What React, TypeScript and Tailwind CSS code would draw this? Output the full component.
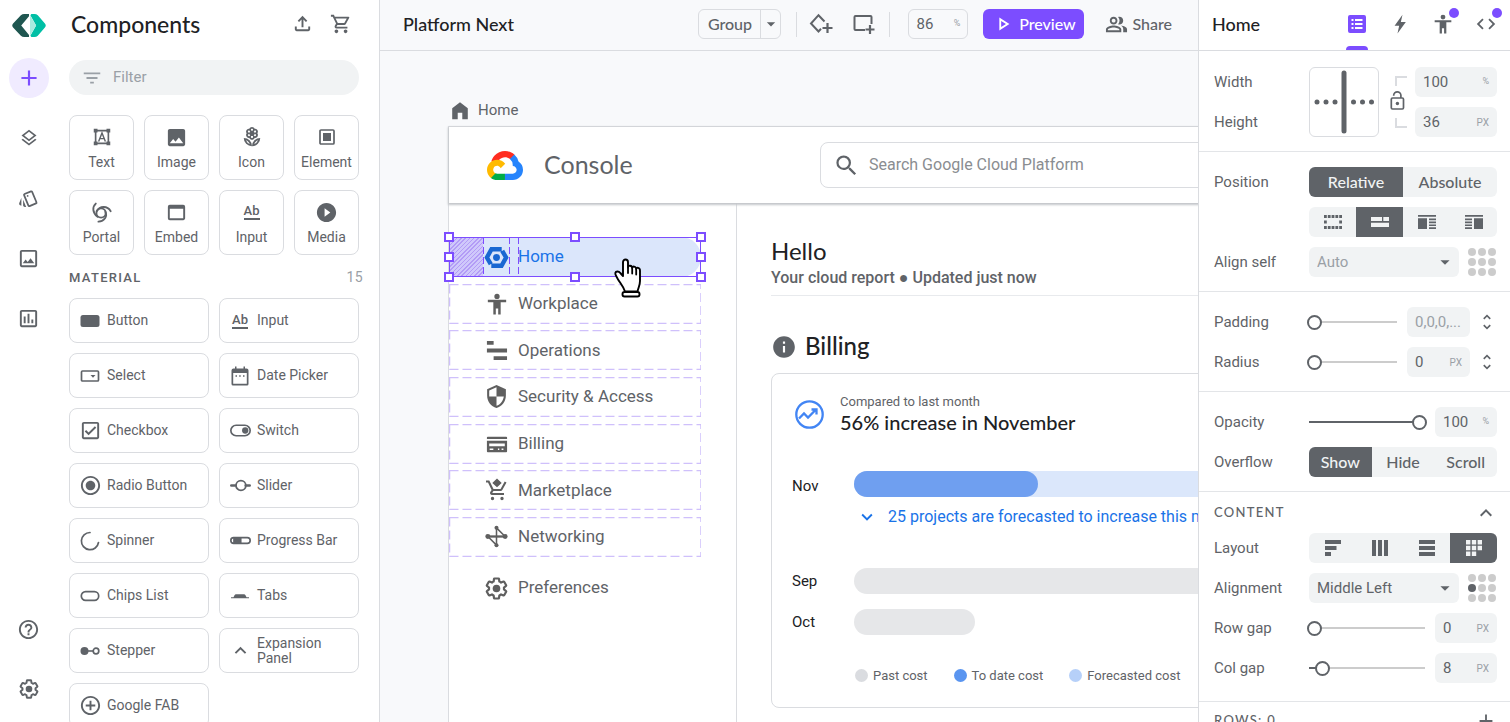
import type { ReactNode } from 'react';
import {
  MdAdd, MdArrowDropDown, MdCode, MdExpandLess, MdExpandMore, MdFilterList, MdImage, MdInfo,
  MdOutlineAddCircleOutline, MdOutlineAssessment, MdOutlineCheckBox, MdOutlineFileUpload, MdOutlineHelpOutline,
  MdOutlineImage, MdOutlineLayers, MdOutlineLocalFlorist, MdOutlinePeopleAlt, MdOutlinePlayArrow,
  MdOutlineShoppingCart, MdOutlineStyle, MdPlayCircleFilled, MdRadioButtonChecked, MdSearch, MdSecurity,
  MdUnfoldMore, MdWebAsset,
} from 'react-icons/md';

type SvgProps = { size?: number; box?: string; className?: string; children: ReactNode };

function Svg({ size = 24, box = '0 0 24 24', className, children }: SvgProps) {
  return (
    <svg width={size} height={size} viewBox={box} fill="currentColor" className={className} aria-hidden="true">
      {children}
    </svg>
  );
}

function Gear({ size }: { size: number }) {
  return (
    <Svg size={size} box="0.500 0.500 23 23">
      <path
        fill="none"
        stroke="currentColor"
        strokeWidth="2.200"
        strokeLinejoin="round"
        d="M19.43 12.98c.04-.32.07-.64.07-.98 0-.34-.03-.66-.07-.98l2.11-1.65c.19-.15.24-.42.12-.64l-2-3.46c-.09-.16-.26-.25-.44-.25-.06 0-.12.01-.17.03l-2.49 1c-.52-.4-1.08-.73-1.69-.98l-.38-2.65C14.46 2.18 14.25 2 14 2h-4c-.25 0-.46.18-.49.42l-.38 2.65c-.61.25-1.17.59-1.69.98l-2.49-1c-.06-.02-.12-.03-.18-.03-.17 0-.34.09-.43.25l-2 3.46c-.13.22-.07.49.12.64l2.11 1.65c-.04.32-.07.65-.07.98 0 .33.03.66.07.98l-2.11 1.65c-.19.15-.24.42-.12.64l2 3.46c.09.16.26.25.44.25.06 0 .12-.01.17-.03l2.49-1c.52.4 1.08.73 1.69.98l.38 2.65c.03.24.24.42.49.42h4c.25 0 .46-.18.49-.42l.38-2.65c.61-.25 1.17-.59 1.69-.98l2.49 1c.06.02.12.03.18.03.17 0 .34-.09.43-.25l2-3.46c.12-.22.07-.49-.12-.64l-2.11-1.65z"
      />
      <circle cx="12" cy="12" r="3.800" />
    </Svg>
  );
}

function Person({ size }: { size: number }) {
  return (
    <Svg size={size}>
      <path d="M12 .8a2.900 2.900 0 1 1 0 5.800 2.900 2.900 0 0 1 0-5.800zM22 10h-6v13.500h-2.700V17h-2.600v6.500H8V10H2V7.400h20z" />
    </Svg>
  );
}

function Brand() {
  return (
    <svg width="34" height="23" viewBox="0 0 100 68" aria-hidden="true">
      <path fill="#1f5650" d="M50 0H36q-6 0-10 4L3 28q-5 6 0 12l23 24q4 4 10 4h14V62L27 34 50 7z" />
      <path fill="#00bfa5" d="M57 0h9q6 0 10 4l21 24q5 6 0 12L76 64q-4 4-10 4h-9l-3-4 17-30L54 4z" />
      <path fill="#a9ebdf" d="M53 4v60l18-30z" />
    </svg>
  );
}

function Cloud() {
  return (
    <svg width="36" height="29" viewBox="0 0 256 206" aria-hidden="true">
      <path fill="#ff2d20" d="M170.252 56.819l22.253-22.253 1.483-9.37C153.437-11.677 88.976-7.496 52.42 33.920 42.267 45.423 34.734 59.764 30.717 74.573l7.970-1.123 44.505-7.340 3.436-3.513c19.797-21.742 53.270-24.667 76.128-6.168l7.496.39z" />
      <path fill="#2684fc" d="M224.205 73.918a100.249 100.249 0 0 0-30.217-48.722l-31.232 31.232a55.515 55.515 0 0 1 20.379 44.037v5.544c15.350 0 27.797 12.445 27.797 27.796 0 15.352-12.446 27.485-27.797 27.485h-55.671l-5.466 5.934v33.340l5.466 5.231h55.670c39.930.311 72.553-31.494 72.864-71.424a72.303 72.303 0 0 0-31.793-60.453" />
      <path fill="#00ac47" d="M71.870 205.796h55.593V161.290H71.870a27.275 27.275 0 0 1-11.477-2.498l-7.887 2.420-22.409 22.253-1.952 7.574c12.567 9.489 26.998 14.813 43.725 14.757" />
      <path fill="#ffba00" d="M71.870 61.425C31.940 61.664-.237 94.228.001 134.158a72.301 72.301 0 0 0 28.222 56.880l32.248-32.246c-13.990-6.322-20.208-22.786-13.887-36.776 6.320-13.990 22.786-20.208 36.775-13.888a27.796 27.796 0 0 1 13.887 13.888l32.248-32.248A72.224 72.224 0 0 0 71.870 61.425" />
    </svg>
  );
}

function AbIcon() {
  return (
    <span className="flex w-4 flex-col items-center border-b-2 border-current font-[Roboto] text-[13px] leading-[14px] font-medium" aria-hidden="true">
      Ab
    </span>
  );
}

const railItems = [
  { label: 'Layers', icon: <MdOutlineLayers size={20} /> },
  { label: 'Styles', icon: <MdOutlineStyle size={21} /> },
  { label: 'Assets', icon: <MdOutlineImage size={23} /> },
  { label: 'Data', icon: <MdOutlineAssessment size={23} /> },
];

const tiles = [
  {
    label: 'Text',
    icon: (
      <Svg size={18}>
        <path fill="none" stroke="currentColor" strokeWidth="2.200" d="M3.500 3.500h17v17h-17z" />
        <path d="M1 1h5v5H1zM18 1h5v5h-5zM1 18h5v5H1zM18 18h5v5h-5z" />
        <path fill="none" stroke="currentColor" strokeWidth="1.900" d="M7.500 18L12 6.500 16.500 18M9 14.200h6" />
      </Svg>
    ),
  },
  { label: 'Image', icon: <MdImage size={23} /> },
  { label: 'Icon', icon: <MdOutlineLocalFlorist size={22} /> },
  {
    label: 'Element',
    icon: (
      <Svg size={16} box="0 0 16 16">
        <rect x="1" y="1" width="14" height="14" rx="1" fill="none" stroke="currentColor" strokeWidth="1.700" />
        <path d="M4 4h8v8H4z" />
      </Svg>
    ),
  },
  {
    label: 'Portal',
    icon: (
      <Svg size={21}>
        <g fill="none" stroke="currentColor" strokeWidth="2.100" strokeLinecap="round">
          <circle cx="11.500" cy="12.500" r="5.300" />
          <path d="M7.500 17C1.500 12.500 1.300 5.500 5.500 1.800M6.500 10.500C10 4.500 18.500 3.800 22.500 10.500M16.500 11c2.500 5.500-1 11-8 11.500" />
        </g>
      </Svg>
    ),
  },
  { label: 'Embed', icon: <MdWebAsset size={23} /> },
  { label: 'Input', icon: <AbIcon /> },
  { label: 'Media', icon: <MdPlayCircleFilled size={23} /> },
];

const materials: { label: string; icon: ReactNode }[] = [
  { label: 'Button', icon: <Svg size={20} box="0 0 20 20"><rect x=".5" y="4" width="19" height="12" rx="2.500" /></Svg> },
  { label: 'Input', icon: <AbIcon /> },
  {
    label: 'Select',
    icon: (
      <Svg size={20} box="0 0 20 20">
        <rect x="1.500" y="5" width="17" height="10" rx="1" fill="none" stroke="currentColor" strokeWidth="1.700" />
        <path d="M10.500 9h5L13 11.700z" />
      </Svg>
    ),
  },
  {
    label: 'Date Picker',
    icon: (
      <Svg size={20} box="0 0 20 20">
        <path fillRule="evenodd" d="M5 .5h1.500v2h7v-2H15v2h1.500a2 2 0 0 1 2 2V18a1.500 1.500 0 0 1-1.500 1.500H3A1.500 1.500 0 0 1 1.500 18V4.500a2 2 0 0 1 2-2H5zM3.200 7v10.800h13.600V7z" />
        <path d="M5.500 9.200H7v1.500H5.500zM9.200 9.200h1.500v1.500H9.200zM13 9.200h1.500v1.500H13z" />
      </Svg>
    ),
  },
  { label: 'Checkbox', icon: <MdOutlineCheckBox size={23} /> },
  {
    label: 'Switch',
    icon: (
      <Svg size={21} box="0 0 20 20">
        <rect x=".8" y="5" width="18.400" height="10" rx="5" fill="none" stroke="currentColor" strokeWidth="1.600" />
        <circle cx="14.500" cy="10" r="3" />
      </Svg>
    ),
  },
  { label: 'Radio Button', icon: <MdRadioButtonChecked size={23} /> },
  {
    label: 'Slider',
    icon: (
      <Svg size={21} box="0 0 20 20">
        <path stroke="currentColor" strokeWidth="2.600" strokeLinecap="round" d="M1.300 10H5M15 10h3.700" />
        <circle cx="10.400" cy="10" r="4.700" fill="none" stroke="currentColor" strokeWidth="1.700" />
      </Svg>
    ),
  },
  {
    label: 'Spinner',
    icon: (
      <Svg size={20} box="0 0 20 20">
        <path fill="none" stroke="currentColor" strokeWidth="1.700" strokeLinecap="round" d="M10 1.500A8.600 8.600 0 1 0 18.500 11.500" />
      </Svg>
    ),
  },
  {
    label: 'Progress Bar',
    icon: (
      <Svg size={21} box="0 0 20 20">
        <rect x=".8" y="7.300" width="18.400" height="5.400" rx="2.700" fill="none" stroke="currentColor" strokeWidth="1.600" />
        <path d="M3 7h8v6H3z" />
      </Svg>
    ),
  },
  {
    label: 'Chips List',
    icon: (
      <Svg size={20} box="0 0 20 20">
        <rect x="1.300" y="5.700" width="17.400" height="8.600" rx="4.300" fill="none" stroke="currentColor" strokeWidth="1.700" />
      </Svg>
    ),
  },
  { label: 'Tabs', icon: <Svg size={20} box="0 0 20 20"><path d="M1 11.300h2.500l1-2q.5-1 1.500-1h8q1 0 1.500 1l1 2H19v1H1z" /></Svg> },
  {
    label: 'Stepper',
    icon: (
      <Svg size={20} box="0 0 20 20">
        <circle cx="4.500" cy="10" r="4" />
        <path d="M8 9.200h6v1.600H8z" />
        <circle cx="16" cy="10" r="2.800" fill="none" stroke="currentColor" strokeWidth="1.700" />
      </Svg>
    ),
  },
  { label: 'Expansion Panel', icon: <MdExpandLess size={23} /> },
  { label: 'Google FAB', icon: <MdOutlineAddCircleOutline size={23} /> },
];

function LeftSide() {
  return (
    <aside className="flex w-[380px] shrink-0 border-r border-[#dadce0] bg-white text-[#5f6368]">
      <nav className="flex w-[57px] flex-col items-center pb-[13px]" aria-label="Tools">
        <a href="#home" aria-label="Start page" className="flex h-[50px] items-center">
          <Brand />
        </a>
        <div className="mt-2 flex flex-col gap-5">
          <button aria-label="Add" className="flex size-10 items-center justify-center rounded-full bg-[#f0ebff] text-[#7c4dff]">
            <MdAdd size={26} />
          </button>
          {railItems.map((item) => (
            <button key={item.label} aria-label={item.label} className="flex size-10 items-center justify-center">
              {item.icon}
            </button>
          ))}
        </div>
        <div className="mt-auto flex flex-col gap-5">
          <button aria-label="Help" className="flex size-10 items-center justify-center"><MdOutlineHelpOutline size={23} /></button>
          <button aria-label="Settings" className="flex size-10 items-center justify-center"><Gear size={20} /></button>
        </div>
      </nav>
      <div className="flex min-w-0 flex-1 flex-col overflow-hidden pr-5 pl-3">
        <div className="flex h-[50px] shrink-0 items-center pr-[7px] pb-[3px] pl-[2px]">
          <h1 className="flex-1 font-[Lato] text-[23px] leading-7 font-medium text-[#202124]">Components</h1>
          <button aria-label="Upload"><MdOutlineFileUpload size={23} /></button>
          <button aria-label="Shop" className="ml-4"><MdOutlineShoppingCart size={22} /></button>
        </div>
        <label className="mt-[10px] flex h-[35px] shrink-0 items-center gap-[10px] rounded-full bg-[#f1f3f4] pr-4 pl-3 text-[#9aa0a6]">
          <MdFilterList size={22} className="shrink-0" />
          <input type="text" aria-label="Filter components" placeholder="Filter" className="w-full min-w-0 bg-transparent text-[15px] outline-none placeholder:text-[#9aa0a6]" />
        </label>
        <div className="mt-5 grid shrink-0 grid-cols-4 gap-[10px]">
          {tiles.map((tile) => (
            <button key={tile.label} className="flex h-[65px] flex-col items-center rounded-lg border border-[#dadce0] pt-2 text-[14px] leading-5">
              <span className="flex h-[26px] items-center justify-center">{tile.icon}</span>
              <span className="mt-[2px]">{tile.label}</span>
            </button>
          ))}
        </div>
        <div className="flex h-[43px] shrink-0 items-center justify-between pt-[2px]">
          <h2 className="text-[13px] font-medium tracking-widest">MATERIAL</h2>
          <span className="-mr-[4px] text-[14px] tracking-wide text-[#9aa0a6]">15</span>
        </div>
        <div className="grid shrink-0 grid-cols-2 gap-[10px]">
          {materials.map((item) => (
            <button key={item.label} className="flex h-[45px] items-center gap-[7px] rounded-lg border border-[#dadce0] pr-4 pl-[10px] text-left text-[14px] leading-[15px]">
              <span className="flex w-5 shrink-0 items-center justify-center [&>svg]:shrink-0">{item.icon}</span>
              {item.label}
            </button>
          ))}
        </div>
      </div>
    </aside>
  );
}

function TopBar() {
  return (
    <header className="flex h-[51px] shrink-0 items-center border-b border-[#dadce0] pr-[26px] pb-[2px] pl-[23px] font-[Lato] font-medium text-[#5f6368]">
      <h2 className="flex-1 text-[18px] leading-6 text-[#202124]">Platform Next</h2>
      <div className="flex h-[30px] w-[83px] rounded-md border border-[#dadce0]">
        <button className="flex-1 pb-px text-[16px]">Group</button>
        <button aria-label="More grouping" className="flex w-[20px] items-center justify-center border-l border-[#dadce0]"><MdArrowDropDown size={20} className="shrink-0" /></button>
      </div>
      <span className="mr-3 ml-[15px] h-[25px] w-px bg-[#dadce0]" />
      <button aria-label="Add symbol">
        <Svg size={24}>
          <g fill="none" stroke="currentColor" strokeWidth="2">
            <path d="M15.500 9.500L9.500 3.200 2 11.500l7.500 8 2.500-2.700" />
            <path strokeWidth="2.200" d="M18.500 11v10M13.500 16h10" />
          </g>
        </Svg>
      </button>
      <button aria-label="Add board" className="ml-[18px]">
        <Svg size={24}>
          <g fill="none" stroke="currentColor" strokeWidth="2">
            <path d="M20.500 12V5a1 1 0 0 0-1-1h-15a1 1 0 0 0-1 1v12a1 1 0 0 0 1 1H14" />
            <path strokeWidth="2.200" d="M19 13v9M14.500 17.500h9" />
          </g>
        </Svg>
      </button>
      <span className="mr-[18px] ml-[14px] h-[25px] w-px bg-[#dadce0]" />
      <label className="flex h-[30px] w-[60px] items-center rounded-md border border-[#dadce0] px-[7px] font-[Roboto] font-normal">
        <input type="text" aria-label="Zoom" defaultValue="86" className="w-full min-w-0 bg-transparent text-[15px] outline-none" />
        <span className="text-[9px] text-[#9aa0a6]">%</span>
      </label>
      <button className="ml-[15px] flex h-[30px] w-[101px] items-center justify-center gap-[5px] rounded-md bg-[#7c4dff] pb-px text-[16px] text-white">
        <MdOutlinePlayArrow size={22} />
        Preview
      </button>
      <button className="ml-[21px] flex items-center gap-1 text-[16px]">
        <MdOutlinePeopleAlt size={23} />
        Share
      </button>
    </header>
  );
}

const navItems = [
  { label: 'Workplace', icon: <Person size={22} /> },
  { label: 'Operations', icon: <Svg size={23}><path d="M2 2h7v4H2zM2 10h21v4H2zM9 18h14v4H9z" /></Svg> },
  { label: 'Security & Access', icon: <MdSecurity size={25} /> },
  {
    label: 'Billing',
    icon: (
      <Svg size={22}>
        <path fillRule="evenodd" d="M2 4h20a1 1 0 0 1 1 1v1.500H1V5a1 1 0 0 1 1-1zM1 8.500h22V20a1 1 0 0 1-1 1H2a1 1 0 0 1-1-1zM3.500 11.500v3h17v-3zM4 17v1.500h4V17zM13 17v1.500h1.500V17zM17 17v1.500h2V17z" />
      </Svg>
    ),
  },
  {
    label: 'Marketplace',
    icon: (
      <Svg size={24}>
        <path d="M7.500 18.800a1.700 1.700 0 1 0 0 3.400 1.700 1.700 0 0 0 0-3.400zM17 18.800a1.700 1.700 0 1 0 0 3.400 1.700 1.700 0 0 0 0-3.400zM7.600 14.200l.9-1.200h7.050c.75 0 1.410-.41 1.750-1.030l4.200-7.470-1.800-1-4.150 7.500H8.500L4.300 2.500H1v2h2l3.600 7.400-1.350 2.200C4.500 15.500 5.500 17 7 17h12v-2H7.400zM12 .5l4.700 4.400L12 9.300 7.300 4.900z" />
      </Svg>
    ),
  },
  {
    label: 'Networking',
    icon: (
      <Svg size={23}>
        <path fill="none" stroke="currentColor" strokeWidth="1.600" d="M12 2.500v19M12 3l9 9M3 12l9 9" />
        <path d="M3 10.800h18v2.400H3z" />
        <circle cx="3" cy="12" r="2.600" />
        <circle cx="21" cy="12" r="2.600" />
        <circle cx="12" cy="2.800" r="2.100" />
        <circle cx="12" cy="21.200" r="2.100" />
      </Svg>
    ),
  },
];

const handles = [
  'left-0 top-0', 'left-1/2 top-0', 'left-full top-0',
  'left-0 top-1/2', 'left-full top-1/2',
  'left-0 top-full', 'left-1/2 top-full', 'left-full top-full',
];

const guides = ['left-[34px]', 'left-[60px]', 'left-[69px]'];

function DashedFrame() {
  return (
    <svg className="pointer-events-none absolute inset-0 size-full" aria-hidden="true">
      <rect x="0.500" y="0.500" width="99.800%" height="39" fill="none" stroke="#cfc0fb" strokeWidth="1.500" strokeDasharray="9 4" />
    </svg>
  );
}

function HandCursor() {
  return (
    <svg width="28" height="40" viewBox="0 0 28 40" className="absolute top-[21px] left-[165px] z-20" aria-hidden="true">
      <path
        fill="#fff"
        stroke="#000"
        strokeWidth="1.900"
        strokeLinejoin="round"
        d="M9 18V4.200C9 .5 14 .5 14 4.200V9.500c0-2.600 4.200-2.400 4.200.8 0-2.600 4-2.300 4 1 0-2.300 3.800-2 3.800 1.400V23c0 4-1.500 6-2.500 10.500H11C9.500 28.500 6 25 3.500 20.500 2.500 18.500 1 16.500 1.300 15c.5-2 3.500-2 5 0z"
      />
      <path stroke="#000" strokeWidth="1.800" strokeLinecap="round" d="M14 10v5M18.200 11v4.500M22.200 12v4.500" />
      <rect x="8.500" y="34" width="17" height="4.500" rx="2" fill="#fff" stroke="#000" strokeWidth="1.900" />
    </svg>
  );
}

function ArtNav() {
  return (
    <nav className="w-[288px] shrink-0 border-r border-[#dadce0] pt-[34px] text-[17px] text-[#5f6368]" aria-label="Console sections">
      <div className="flex h-[320px] w-[252px] flex-col justify-between">
        <a href="#home" className="relative flex h-10 items-center gap-[9px] rounded-r-full bg-[#dbe6fb] pl-[35px] text-[#1a73e8]">
          <span className="absolute inset-y-0 left-0 w-[34px] bg-[repeating-linear-gradient(135deg,#b39cf6_0_1px,#cfc8fb_1px_3px)]" />
          <Svg size={25} className="shrink-0">
            <path fill="none" stroke="#1967d2" strokeWidth="4.200" d="M17 4.100H7.200L2.800 12l3.700 6.400M7 19.900h9.800L21.200 12l-3.700-6.400" />
            <circle cx="12" cy="12" r="3.300" fill="#1967d2" />
          </Svg>
          Home
          {guides.map((place) => (
            <span key={place} className={`absolute inset-y-0 w-px bg-[repeating-linear-gradient(180deg,#7c4dff_0_7px,transparent_7px_10px)] ${place}`} />
          ))}
          <span className="absolute inset-0 border border-[#7c4dff]" />
          {handles.map((place) => (
            <span key={place} className={`absolute size-[10px] -translate-1/2 border-2 border-[#7c4dff] bg-white ${place}`} />
          ))}
          <HandCursor />
        </a>
        {navItems.map((item) => (
          <a key={item.label} href={`#${item.label}`} className="relative flex h-10 items-center gap-[9px] pl-[35px]">
            <span className="flex w-[25px] justify-center text-[#5f5f5f]">{item.icon}</span>
            {item.label}
            <DashedFrame />
          </a>
        ))}
      </div>
      <a href="#preferences" className="mt-[11px] flex h-10 items-center gap-[9px] pl-[35px]">
        <span className="flex w-[25px] justify-center text-[#5f5f5f]"><Gear size={23} /></span>
        Preferences
      </a>
    </nav>
  );
}

const legend = [
  { label: 'Past cost', dot: 'bg-[#dadce0]' },
  { label: 'To date cost', dot: 'bg-[#5a95f0]' },
  { label: 'Forecasted cost', dot: 'bg-[#b6d0f9]' },
];

function Report() {
  return (
    <div className="min-w-0 flex-1 pt-[33px] pl-[34px] text-[#202124]">
      <div className="border-b border-[#e8eaed] pb-[5px]">
        <h3 className="font-[Lato] text-[24px] leading-[30px]">Hello</h3>
        <p className="text-[16px] leading-[24px] font-medium text-[#5f6368]">Your cloud report ● Updated just now</p>
      </div>
      <div className="mt-9 flex h-[30px] items-center gap-2">
        <MdInfo size={26} className="text-[#5f6368]" />
        <h3 className="pb-[2px] font-[Lato] text-[24px] leading-[30px] font-medium">Billing</h3>
      </div>
      <section className="mt-[11px] rounded-lg border border-[#dadce0] pb-[21px] pl-5">
        <div className="flex items-center gap-4 pt-[19px] pl-[3px]">
          <Svg size={29} box="0 0 29 29">
            <g fill="none" stroke="#4285f4" strokeWidth="2.300">
              <circle cx="14.500" cy="14.500" r="13.200" />
              <path d="M4 18.500l5-5 4 4 8-8M16.500 9.500h5v5" />
            </g>
          </Svg>
          <div className="pb-[3px]">
            <p className="text-[13px] leading-[18px] text-[#5f6368]">Compared to last month</p>
            <p className="font-[Lato] text-[20px] leading-[22px] font-medium">56% increase in November</p>
          </div>
        </div>
        <div className="mt-[35px] grid grid-cols-[62px_1fr] text-[15px]">
          <span className="pt-1">Nov</span>
          <div className="h-[26px] rounded-l-full bg-[#dbe7fb]">
            <div className="h-full w-[184px] rounded-full bg-[#6f9ff0]" />
          </div>
          <span />
          <button className="flex h-[38px] items-center gap-[10px] pl-[2px] text-[16px] whitespace-nowrap text-[#1a73e8]">
            <MdExpandMore size={22} />
            25 projects are forecasted to increase this month
          </button>
          <span className="mt-8 pt-[2px]">Sep</span>
          <div className="mt-8 h-[26px] rounded-full bg-[#e6e7e9]" />
          <span className="mt-[15px] pt-[2px]">Oct</span>
          <div className="mt-[15px] h-[26px] w-[121px] rounded-full bg-[#e6e7e9]" />
        </div>
        <div className="mt-[31px] flex gap-[26px] pl-[63px] text-[13px] leading-5 text-[#5f6368]">
          {legend.map((item) => (
            <span key={item.label} className="flex items-center gap-[5px]">
              <i className={`size-[13px] rounded-full ${item.dot}`} />
              {item.label}
            </span>
          ))}
        </div>
      </section>
    </div>
  );
}

function Canvas() {
  return (
    <main className="flex min-w-0 flex-1 flex-col overflow-hidden bg-[#f8f9fb]">
      <TopBar />
      <div className="flex min-h-0 flex-1 flex-col overflow-hidden pt-[45px] pl-[68px]">
        <div className="flex h-[30px] shrink-0 items-center gap-[7px] pb-px pl-px text-[15px] text-[#5f6368]">
          <Svg size={22}><path d="M12 2.500L20.500 9v12h-6v-7h-5v7h-6V9z" /></Svg>
          Home
        </div>
        <div className="flex w-[1100px] flex-1 flex-col border-t border-l border-[#dadce0] bg-white">
          <div className="z-10 flex h-[76px] shrink-0 items-center pl-[38px] shadow-[0_1px_2px_1px_#c4c6ca]">
            <Cloud />
            <span className="ml-[21px] w-[276px] pb-[3px] font-[Lato] text-[25px] leading-8 text-[#5f6368]">Console</span>
            <label className="flex h-[46px] flex-1 items-center gap-[9px] rounded-lg border border-[#dadce0] pl-3 text-[#5f6368]">
              <MdSearch size={27} className="shrink-0" />
              <input type="search" aria-label="Search" placeholder="Search Google Cloud Platform" className="w-full bg-transparent text-[16px] outline-none placeholder:text-[#8a8d91]" />
            </label>
          </div>
          <div className="flex flex-1">
            <ArtNav />
            <Report />
          </div>
        </div>
      </div>
    </main>
  );
}

function Row({ label, children }: { label: string; children: ReactNode }) {
  return (
    <div className="flex h-[30px] items-center">
      <span className="w-[95px] shrink-0">{label}</span>
      <div className="flex min-w-0 flex-1 items-center">{children}</div>
    </div>
  );
}

function Field({ label, value, unit, width, muted }: { label: string; value: string; unit?: string; width: string; muted?: boolean }) {
  return (
    <label className={`flex h-[30px] shrink-0 items-center rounded-md bg-[#f1f3f4] px-2 ${width}`}>
      <input type="text" aria-label={label} defaultValue={value} className={`w-full min-w-0 bg-transparent text-[15px] text-ellipsis outline-none ${muted ? 'text-[#9aa0a6]' : ''}`} />
      {unit && <span className={`text-[#9aa0a6] ${unit === '%' ? 'text-[9px]' : 'text-[10px]'}`}>{unit}</span>}
    </label>
  );
}

function Range({ label, value }: { label: string; value: number }) {
  return (
    <input
      type="range"
      aria-label={label}
      defaultValue={value}
      style={{ backgroundImage: `linear-gradient(to right, #5f6368 ${value}%, #cccccc ${value}%)` }}
      className="-mx-[2px] mr-2 h-4 min-w-0 flex-1 appearance-none bg-[length:calc(100%-4px)_2px] bg-center bg-no-repeat [&::-webkit-slider-thumb]:size-[15px] [&::-webkit-slider-thumb]:appearance-none [&::-webkit-slider-thumb]:rounded-full [&::-webkit-slider-thumb]:border-2 [&::-webkit-slider-thumb]:border-[#5f6368] [&::-webkit-slider-thumb]:bg-white"
    />
  );
}

function Segments({ items, active }: { items: { label: string; content: ReactNode }[]; active: number }) {
  return (
    <div className="flex h-[30px] flex-1 overflow-hidden rounded-md bg-[#f1f3f4] font-[Lato] text-[16px] font-medium">
      {items.map((item, i) => (
        <button
          key={item.label}
          aria-label={item.label}
          aria-pressed={i === active}
          className={`flex flex-1 basis-0 items-center justify-center ${i === active ? 'bg-[#5f6368] text-[#f1f3f4]' : ''}`}
        >
          {item.content}
        </button>
      ))}
    </div>
  );
}

function Dropdown({ label, value, muted }: { label: string; value: string; muted?: boolean }) {
  return (
    <div className="relative h-[30px] w-[150px] shrink-0">
      <select aria-label={label} defaultValue={value} className={`size-full appearance-none rounded-md bg-[#f1f3f4] px-2 text-[15px] ${muted ? 'text-[#9aa0a6]' : ''}`}>
        <option>{value}</option>
      </select>
      <MdArrowDropDown size={22} className="pointer-events-none absolute top-1 right-[3px]" />
    </div>
  );
}

function DotGrid({ label, active }: { label: string; active?: number }) {
  return (
    <div role="group" aria-label={label} className="ml-[9px] grid grid-cols-3 gap-[2px]">
      {Array.from({ length: 9 }, (_, i) => (
        <button key={i} aria-label={`Position ${i + 1}`} className={`size-2 rounded-full ${i === active ? 'bg-[#5f6368]' : 'bg-[#cccccc]'}`} />
      ))}
    </div>
  );
}

const flows = [
  { label: 'Free', content: <Svg size={18} box="0 0 18 14"><path fill="none" stroke="currentColor" strokeWidth="2.800" strokeDasharray="2.800 1" d="M0 1.500h18M0 12.500h18" /><path d="M0 5.600h2.800v2.800H0zM15.200 5.600H18v2.800h-2.800z" /></Svg> },
  { label: 'Inline', content: <Svg size={18} box="0 0 18 14"><path d="M0 2h11v4H0zM12.300 2H18v4h-5.700zM0 7.800h18v4.200H0z" /></Svg> },
  { label: 'Float left', content: <Svg size={18} box="0 0 18 14"><path d="M0 0h18v1.700H0zM0 3.300h9V14H0zM11 3.500h7v1.700h-7zM11 6.500h7v1.700h-7zM11 9.400h7v1.700h-7zM11 12.300h7V14h-7z" /></Svg> },
  { label: 'Float right', content: <Svg size={18} box="0 0 18 14"><path d="M0 0h18v1.700H0zM9 3.300h9V14H9zM0 3.500h7v1.700H0zM0 6.500h7v1.700H0zM0 9.400h7v1.700H0zM0 12.300h7V14H0z" /></Svg> },
];

const layouts = [
  { label: 'Free layout', content: <Svg size={16} box="0 0 16 16"><path d="M0 0h16v4H0zM0 6h11.500v4H0zM0 12h6v4H0z" /></Svg> },
  { label: 'Columns', content: <Svg size={16} box="0 0 16 16"><path d="M0 0h4v16H0zM6 0h4v16H6zM12 0h4v16h-4z" /></Svg> },
  { label: 'Rows', content: <Svg size={16} box="0 0 16 16"><path d="M0 0h16v4H0zM0 6h16v4H0zM0 12h16v4H0z" /></Svg> },
  { label: 'Grid', content: <Svg size={16} box="0 0 16 16"><path d="M0 0h4.400v4.400H0zM5.800 0h4.400v4.400H5.800zM11.600 0H16v4.400h-4.400zM0 5.800h4.400v4.400H0zM5.800 5.800h4.400v4.400H5.800zM11.600 5.800H16v4.400h-4.400zM0 11.600h4.400V16H0zM5.800 11.600h4.400V16H5.800z" /></Svg> },
];

const overflowModes = ['Show', 'Hide', 'Scroll'].map((label) => ({ label, content: label }));
const positions = ['Relative', 'Absolute'].map((label) => ({ label, content: label }));

const tabs = [
  { label: 'Properties', icon: <Svg size={18} box="0 0 18 18"><path fillRule="evenodd" d="M2 0h14a2 2 0 0 1 2 2v14a2 2 0 0 1-2 2H2a2 2 0 0 1-2-2V2a2 2 0 0 1 2-2zM3.500 4v2h2V4zM7 4v2h7.500V4zM3.500 8v2h2V8zM7 8v2h7.500V8zM3.500 12v2h2v-2zM7 12v2h7.500v-2z" /></Svg>, dot: false, active: true },
  { label: 'Interactions', icon: <Svg size={20}><path d="M15 1L5.500 14h5.500l-2 9.500L19 9.500h-6z" /></Svg>, dot: false, active: false },
  { label: 'Accessibility', icon: <Person size={20} />, dot: true, active: false },
  { label: 'Code', icon: <MdCode size={22} />, dot: true, active: false },
];

const sectionClass = 'flex flex-col gap-[10px] border-b border-[#e3e5e8] pt-[15px] pr-[13px] pb-[14px] pl-[15px]';

function Inspector() {
  return (
    <aside className="flex w-[312px] shrink-0 flex-col overflow-hidden border-l border-[#dadce0] bg-white text-[15px] text-[#5f6368]">
      <header className="flex h-[51px] shrink-0 items-center border-b border-[#dadce0] pr-[3px] pl-[13px]">
        <h2 className="flex-1 pb-[3px] font-[Lato] text-[18px] leading-6 font-medium text-[#202124]">Home</h2>
        {tabs.map((tab) => (
          <button key={tab.label} aria-label={tab.label} className={`relative flex h-full w-[43px] items-center justify-center pb-[3px] ${tab.active ? 'text-[#7c4dff]' : ''}`}>
            {tab.icon}
            {tab.active && <span className="absolute bottom-0 left-[11px] h-1 w-[22px] rounded-t bg-[#7c4dff]" />}
            {tab.dot && <span className="absolute top-[8px] left-[28px] size-[10px] rounded-full bg-[#7c4dff]" />}
          </button>
        ))}
      </header>
      <div className="shrink-0 pt-px">
        <section className={sectionClass}>
          <div className="flex items-center">
            <div className="flex w-[95px] flex-col gap-[10px] leading-[30px]">
              <span>Width</span>
              <span>Height</span>
            </div>
            <div className="size-[70px] rounded-md border border-[#dadce0]">
              <svg className="size-full" viewBox="0 0 68 68" aria-hidden="true">
                <path stroke="#5f6368" strokeWidth="5" strokeLinecap="round" d="M34 5v58" />
                <g fill="#5f6368">
                  <circle cx="7" cy="34" r="2.500" /><circle cx="16" cy="34" r="2.500" /><circle cx="25" cy="34" r="2.500" />
                  <circle cx="43.500" cy="34" r="2.500" /><circle cx="52.500" cy="34" r="2.500" /><circle cx="61.500" cy="34" r="2.500" />
                </g>
              </svg>
            </div>
            <button aria-label="Lock ratio" className="flex flex-1 flex-col items-center">
              <Svg size={54} box="0 0 54 54" className="-mx-3">
                <path fill="none" stroke="#dadce0" strokeWidth="2" d="M37 2H26v9M26 43v9h11" />
                <g fill="none" stroke="#5f6368" strokeWidth="1.700">
                  <rect x="21.300" y="23" width="12.200" height="11" rx="1.200" />
                  <path d="M23.700 20.800v-.5a3.600 3.400 0 0 1 7.200 0V23" />
                </g>
                <circle cx="27.400" cy="28.500" r="1.700" />
              </Svg>
            </button>
            <div className="flex flex-col gap-[10px]">
              <Field label="Width" value="100" unit="%" width="w-[82px]" />
              <Field label="Height" value="36" unit="PX" width="w-[82px]" />
            </div>
          </div>
        </section>
        <section className={sectionClass}>
          <Row label="Position"><Segments items={positions} active={0} /></Row>
          <div className="flex pl-[95px]"><Segments items={flows} active={1} /></div>
          <Row label="Align self">
            <Dropdown label="Align self" value="Auto" muted />
            <DotGrid label="Self alignment" />
          </Row>
        </section>
        <section className={sectionClass}>
          <Row label="Padding">
            <Range label="Padding" value={0} />
            <Field label="Padding value" value="0,0,0,..." width="w-[63px]" muted />
            <button aria-label="Expand padding" className="ml-[7px]"><MdUnfoldMore size={20} /></button>
          </Row>
          <Row label="Radius">
            <Range label="Radius" value={0} />
            <Field label="Radius value" value="0" unit="PX" width="w-[63px]" />
            <button aria-label="Expand radius" className="ml-[7px]"><MdUnfoldMore size={20} /></button>
          </Row>
        </section>
        <section className={sectionClass}>
          <Row label="Opacity">
            <Range label="Opacity" value={100} />
            <Field label="Opacity value" value="100" unit="%" width="w-[62px]" />
          </Row>
          <Row label="Overflow"><Segments items={overflowModes} active={0} /></Row>
        </section>
        <section className="border-b border-[#e3e5e8] pr-[13px] pb-[18px] pl-[15px]">
          <div className="flex h-[41px] items-center justify-between">
            <h3 className="font-[Lato] text-[13px] font-medium tracking-widest">CONTENT</h3>
            <button aria-label="Collapse content" className="-mr-px"><MdExpandLess size={24} /></button>
          </div>
          <div className="flex flex-col gap-[10px]">
            <Row label="Layout"><Segments items={layouts} active={3} /></Row>
            <Row label="Alignment">
              <Dropdown label="Alignment" value="Middle Left" />
              <DotGrid label="Content alignment" active={3} />
            </Row>
            <Row label="Row gap">
              <Range label="Row gap" value={0} />
              <Field label="Row gap value" value="0" unit="PX" width="w-[62px]" />
            </Row>
            <Row label="Col gap">
              <Range label="Col gap" value={8} />
              <Field label="Col gap value" value="8" unit="PX" width="w-[62px]" />
            </Row>
          </div>
        </section>
        <div className="flex h-[38px] items-center justify-between pr-[13px] pl-[15px]">
          <h3 className="font-[Lato] text-[13px] font-medium tracking-widest">ROWS: 0</h3>
          <button aria-label="Add row"><MdAdd size={22} /></button>
        </div>
      </div>
    </aside>
  );
}

export default function App() {
  return (
    <div className="flex h-screen overflow-hidden bg-white font-[Roboto]">
      <LeftSide />
      <Canvas />
      <Inspector />
    </div>
  );
}
